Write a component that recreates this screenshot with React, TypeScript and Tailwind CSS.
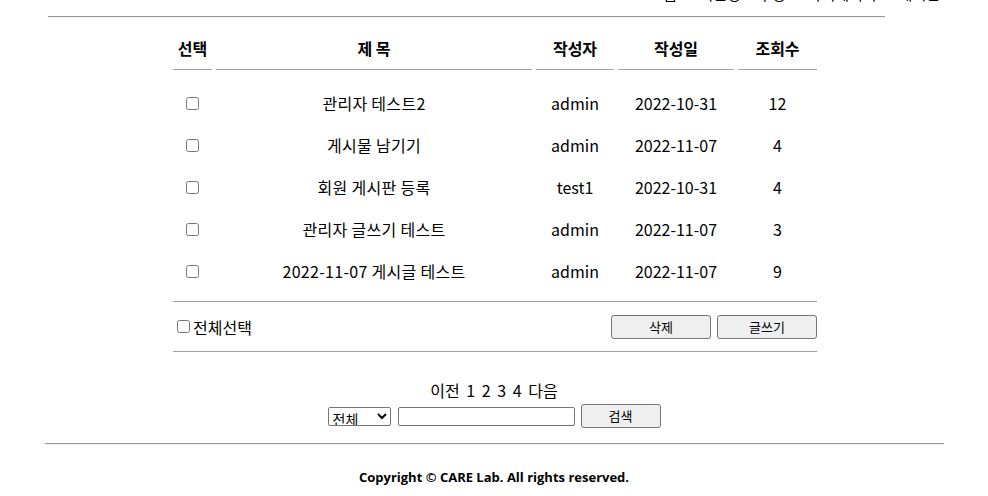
import React from 'react';

const font = { fontFamily: '"Noto Sans CJK KR", "Noto Sans", sans-serif' };

const posts = [
  { title: '관리자 테스트2', writer: 'admin', date: '2022-10-31', hit: 12 },
  { title: '게시물 남기기', writer: 'admin', date: '2022-11-07', hit: 4 },
  { title: '회원 게시판 등록', writer: 'test1', date: '2022-10-31', hit: 4 },
  { title: '관리자 글쓰기 테스트', writer: 'admin', date: '2022-11-07', hit: 3 },
  { title: '2022-11-07 게시글 테스트', writer: 'admin', date: '2022-11-07', hit: 9 },
];

const cols = 'grid grid-cols-[39px_316px_78px_116px_79px] gap-x-[4px]';

const App: React.FC = () => {
  return (
    <div className="w-[988px] h-[496px] bg-white text-black overflow-hidden" style={font}>
      {/* 상단 메뉴 (잘려서 아래쪽만 보임) */}
      <div className="h-[16px] overflow-hidden">
        <div className="flex justify-end gap-[22px] pr-[48px] -mt-[16px] text-[15px] leading-[20px]">
          <span>홈</span>
          <span>회원정보 수정</span>
          <span>마이페이지</span>
          <span>게시판</span>
        </div>
      </div>
      <div className="ml-[48px] w-[837px] border-t border-b border-t-[#9a9a9a] border-b-[#eeeeee]" />

      <div className="w-[644px] ml-[173px] mt-[13px] text-[16px]">
        <div className={cols}>
          {['선택', '제 목', '작성자', '작성일', '조회수'].map((h) => (
            <div
              key={h}
              className="h-[39px] flex items-center justify-center font-bold border-b border-[#a0a0a0] pb-[4px]"
            >
              {h}
            </div>
          ))}
        </div>

        <div className="mt-[12px]">
          {posts.map((p, i) => (
            <div key={i} className={`${cols} h-[42px] items-center text-center`}>
              <div className="flex justify-center">
                <input type="checkbox" className="m-0 w-[13px] h-[13px]" />
              </div>
              <div className="tracking-[0.3px] -mt-[1px]">{p.title}</div>
              <div className="-mt-[1px]">{p.writer}</div>
              <div className="-mt-[1px]">{p.date}</div>
              <div className="-mt-[1px]">{p.hit}</div>
            </div>
          ))}
        </div>

        <div className="mt-[9px] border-t border-[#a0a0a0] h-[51px] flex items-center justify-between border-b">
          <label className="flex items-center">
            <input type="checkbox" className="ml-[4px] mr-[3px] w-[13px] h-[13px]" />
            전체선택
          </label>
          <div className="flex gap-[6px]">
            <button className="w-[100px] h-[24px] bg-[#efefef] border border-[#767676] rounded-[3px] text-[13px]">
              삭제
            </button>
            <button className="w-[100px] h-[24px] bg-[#efefef] border border-[#767676] rounded-[3px] text-[13px]">
              글쓰기
            </button>
          </div>
        </div>
      </div>

      <div className="mt-[26px] text-center text-[16px] leading-[24px] [word-spacing:3px]">이전 1 2 3 4 다음</div>
      <div className="mt-[2px] flex justify-center items-center h-[24px]">
        <select className="w-[63px] h-[19px] border border-[#767676] rounded-[2px] text-[14px] bg-white">
          <option>전체</option>
        </select>
        <input type="text" className="ml-[7px] w-[177px] h-[19px] border border-[#767676] rounded-[2px]" />
        <button className="ml-[6px] w-[80px] h-[24px] bg-[#efefef] border border-[#767676] rounded-[3px] text-[13px]">
          검색
        </button>
      </div>

      <div className="mt-[15px] ml-[45px] w-[899px] border-t border-b border-t-[#9a9a9a] border-b-[#eeeeee]" />
      <div className="mt-[22px] text-center text-[13px] leading-[20px] font-bold" style={{ fontFamily: '"Open Sans", "Noto Sans CJK KR", sans-serif' }}>
        Copyright © CARE Lab. All rights reserved.
      </div>
    </div>
  );
};

export default App;
